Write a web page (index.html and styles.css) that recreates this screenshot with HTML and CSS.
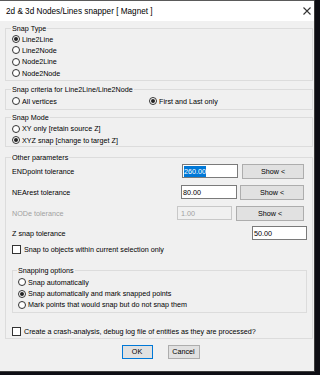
FILE: index.html
```html
<!DOCTYPE html>
<html lang="en">
<head>
    <meta charset="UTF-8">
    <meta name="viewport" content="width=device-width, initial-scale=1.0">
    <title>2d &amp; 3d Nodes/Lines snapper</title>
    <link rel="stylesheet" href="styles.css">
</head>
<body>
    <div class="window">
        <div class="titlebar">
            <span class="title">2d &amp; 3d Nodes/Lines snapper [ Magnet ]</span>
            <svg class="close" width="8" height="8" viewBox="0 0 8 8">
                <path d="M0.5 0.5 L7.5 7.5 M7.5 0.5 L0.5 7.5" stroke="#333" stroke-width="1.1" fill="none"/>
            </svg>
        </div>

        <div class="content">
            <fieldset class="group g-type">
                <legend>Snap Type</legend>
                <div class="opt"><span class="radio on"></span>Line2Line</div>
                <div class="opt"><span class="radio"></span>Line2Node</div>
                <div class="opt"><span class="radio"></span>Node2Line</div>
                <div class="opt"><span class="radio"></span>Node2Node</div>
            </fieldset>

            <fieldset class="group g-criteria">
                <legend>Snap criteria for Line2Line/Line2Node</legend>
                <div class="opt-row">
                    <div class="opt first-col"><span class="radio"></span>All vertices</div>
                    <div class="opt"><span class="radio on"></span>First and Last only</div>
                </div>
            </fieldset>

            <fieldset class="group g-mode">
                <legend>Snap Mode</legend>
                <div class="opt"><span class="radio"></span>XY only [retain source Z]</div>
                <div class="opt"><span class="radio on"></span>XYZ snap [change to target Z]</div>
            </fieldset>

            <fieldset class="group g-other">
                <legend>Other parameters</legend>

                <div class="param">
                    <span class="param-label">ENDpoint tolerance</span>
                    <div class="field"><span class="sel">260.00</span></div>
                    <button class="btn show-end">Show &lt;</button>
                </div>
                <div class="param">
                    <span class="param-label">NEArest tolerance</span>
                    <div class="field">80.00</div>
                    <button class="btn show-near">Show &lt;</button>
                </div>
                <div class="param">
                    <span class="param-label disabled">NODe tolerance</span>
                    <div class="field disabled narrow">1.00</div>
                    <button class="btn show-node">Show &lt;</button>
                </div>
                <div class="param z-row">
                    <span class="param-label">Z snap tolerance</span>
                    <div class="field narrow">50.00</div>
                </div>

                <div class="opt check-row"><span class="check"></span>Snap to objects within current selection only</div>

                <fieldset class="group g-snapping">
                    <legend>Snapping options</legend>
                    <div class="opt"><span class="radio"></span>Snap automatically</div>
                    <div class="opt"><span class="radio on"></span>Snap automatically and mark snapped points</div>
                    <div class="opt"><span class="radio"></span>Mark points that would snap but do not snap them</div>
                </fieldset>

                <div class="opt crash-row"><span class="check"></span>Create a crash-analysis, debug log file of entities as they are processed?</div>
            </fieldset>

            <div class="actions">
                <button class="btn action default">OK</button>
                <button class="btn action">Cancel</button>
            </div>
        </div>
    </div>
</body>
</html>
```

FILE: styles.css
```css
body {
    margin: 0;
    background-color: #0e0e14;
    font-family: "Liberation Sans", Arial, sans-serif;
    font-size: 7.2px;
    color: #000;
}

.window {
    width: 314px;
    height: 371px;
    background-color: #f0f0f0;
    border-right: 1px solid #3c3c3c;
    border-bottom: 1px solid #3c3c3c;
    overflow: hidden;
}

.titlebar {
    height: 21px;
    box-sizing: border-box;
    background-color: #fff;
    border-top: 1px solid #5a5a5a;
    display: flex;
    align-items: center;
    justify-content: space-between;
    padding: 0 3px 0 6px;
}

.title {
    font-size: 8.2px;
}

.close {
    display: block;
}

.content {
    padding: 2.5px 1px 0 5px;
}

.group {
    margin: 0;
    min-width: 0;
    border: 1px solid #dcdcdc;
    padding: 0 6px;
}

.group legend {
    padding: 0 1px;
    margin-left: -1px;
    line-height: 9px;
}

.g-type {
    padding-top: 1px;
    padding-bottom: 1.5px;
}

.g-criteria {
    margin-top: 3.5px;
    padding-top: 1.8px;
    padding-bottom: 2.5px;
}

.g-mode {
    margin-top: 2.5px;
    padding-top: 1.5px;
    padding-bottom: 0.5px;
}

.g-other {
    margin-top: 5.5px;
    padding-top: 2.5px;
    padding-right: 5px;
    padding-bottom: 0.5px;
}

.g-snapping {
    margin-top: 11px;
    padding-left: 5px;
    padding-top: 1.8px;
    padding-bottom: 1px;
}

.opt {
    display: flex;
    align-items: center;
    gap: 2px;
    height: 11.3px;
    white-space: nowrap;
}

.opt-row {
    display: flex;
}

.first-col {
    width: 137px;
}

.radio {
    width: 8px;
    height: 8px;
    box-sizing: border-box;
    border: 1px solid #333;
    border-radius: 50%;
    background-color: #fff;
    display: flex;
    align-items: center;
    justify-content: center;
    flex-shrink: 0;
}

.radio.on::after {
    content: "";
    width: 4px;
    height: 4px;
    border-radius: 50%;
    background-color: #222;
}

.check {
    width: 9px;
    height: 9px;
    box-sizing: border-box;
    border: 1px solid #333;
    background-color: #fff;
    flex-shrink: 0;
    margin-right: 1px;
}

.param {
    display: flex;
    align-items: center;
    height: 14px;
    margin-top: 7px;
}

.param:first-of-type {
    margin-top: 0;
}

.z-row {
    margin-top: 6px;
}

.param-label {
    flex: 1;
}

.param-label.disabled {
    color: #a0a0a0;
}

.field {
    width: 56px;
    height: 14px;
    box-sizing: border-box;
    border: 1px solid #7a7a7a;
    background-color: #fff;
    padding: 0 1px;
    display: flex;
    align-items: center;
}

.field.narrow {
    width: 55px;
}

.field.disabled {
    border-color: #c8c8c8;
    background-color: #f0f0f0;
    color: #a0a0a0;
    padding-left: 3px;
}

.sel {
    background-color: #0078d7;
    color: #fff;
    padding: 1px 0;
}

.btn {
    height: 15px;
    box-sizing: border-box;
    border: 1px solid #adadad;
    background-color: #e1e1e1;
    font: inherit;
    color: #000;
    padding: 0;
    display: flex;
    align-items: center;
    justify-content: center;
}

.show-end {
    width: 62px;
    margin-left: 4px;
    margin-right: 3px;
}

.show-near {
    width: 64px;
    margin-left: 3px;
    margin-right: 3px;
}

.show-node {
    width: 68px;
    margin-left: 4px;
    margin-right: 3px;
}

.check-row {
    margin-top: 3.5px;
    height: 11px;
}

.crash-row {
    margin-top: 13.5px;
    height: 11px;
}

.actions {
    display: flex;
    justify-content: center;
    gap: 15px;
    margin-top: 6px;
    padding-left: 3px;
}

.action {
    height: 14px;
    width: 32px;
}

.action.default {
    width: 31px;
    border-color: #0078d7;
}
```
